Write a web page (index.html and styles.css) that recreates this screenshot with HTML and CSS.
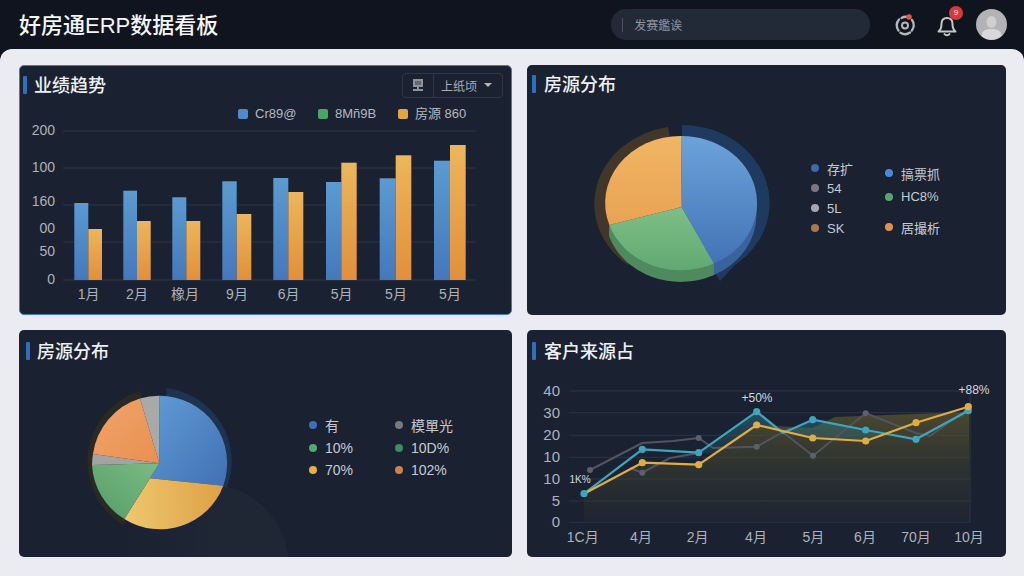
FILE: index.html
```html
<!DOCTYPE html>
<html lang="zh">
<head>
<meta charset="utf-8">
<title>好房通ERP数据看板</title>
<link rel="stylesheet" href="styles.css">
</head>
<body>
<div class="app">
  <header class="topbar">
    <h1 class="brand">好房通ERP数据看板</h1>
    <div class="search"><span class="caret-line"></span><span class="search-text">发赛鑑诶</span></div>
    <div class="actions">
      <svg class="ico" width="22" height="24" viewBox="0 0 22 24" fill="none" stroke="#b4b7bb" stroke-width="2.4" stroke-linecap="round">
        <path d="M5 6.5 A8.6 8.6 0 0 0 4.5 17.5"/><path d="M6.5 19.7 A8.6 8.6 0 0 0 16 19.5"/><path d="M17.8 17.5 A8.6 8.6 0 0 0 18 7"/><path d="M7.5 5 A8.6 8.6 0 0 1 12 3.8"/>
        <circle cx="11" cy="12.5" r="3" stroke-width="2"/>
        <circle cx="15" cy="4" r="2.8" fill="#e2544c" stroke="none"/>
      </svg>
      <div class="bell">
        <svg width="20" height="24" viewBox="0 0 20 24" fill="none" stroke="#c2c5c9" stroke-width="2" stroke-linejoin="round" stroke-linecap="round">
          <path d="M1.5 18.5 C4.5 16 4.5 14 4.5 11 C4.5 7.5 6.5 5 10 5 C13.5 5 15.5 7.5 15.5 11 C15.5 14 15.5 16 18.5 18.5 Z"/>
          <path d="M7.5 21 C8.5 22.5 11.5 22.5 12.5 21"/>
        </svg>
        <span class="badge">9</span>
      </div>
      <svg class="avatar" width="31" height="31" viewBox="0 0 31 31">
        <circle cx="15.5" cy="15.5" r="15.5" fill="#b3b3b5"/>
        <ellipse cx="15.5" cy="13" rx="5" ry="6" fill="#cfcfd1"/>
        <path d="M5.5 27 C6 21 10 20 15.5 20 C21 20 25 21 25.5 27 A15.5 15.5 0 0 1 5.5 27 Z" fill="#d8d8da"/>
      </svg>
    </div>
  </header>

  <main class="board">
    <section class="card card--active">
      <div class="card-head">
        <span class="mark mark--a"></span><h2 class="card-title">业绩趋势</h2>
        <div class="tools">
          <span class="tool-icon">
            <svg width="14" height="15" viewBox="0 0 14 15" fill="#8f9399"><path d="M2 1h10v8H2z"/><path d="M4 3.5h6v1H4zM4 5.5h6v1H4z" fill="#3a404b"/><path d="M6 9h2v2h4v2H2v-2h4z"/></svg>
          </span>
          <span class="tool-text">上纸顷</span>
          <span class="tool-caret"></span>
        </div>
      </div>
      <div class="bar-legend">
        <span class="sq-item sq-item--a"><i class="sq sq--blue"></i>Cr89@</span>
        <span class="sq-item sq-item--b"><i class="sq sq--green"></i>8Mñ9B</span>
        <span class="sq-item"><i class="sq sq--orange"></i>房源 860</span>
      </div>
      <svg class="chart" viewBox="20 121 491 193">
        <defs>
          <linearGradient id="gb" x1="0" y1="0" x2="0" y2="1"><stop offset="0" stop-color="#5b9bd0"/><stop offset="1" stop-color="#4478bc"/></linearGradient>
          <linearGradient id="go" x1="0" y1="0" x2="0" y2="1"><stop offset="0" stop-color="#ecb65c"/><stop offset="1" stop-color="#e28f3b"/></linearGradient>
        </defs>
        <g stroke="#2c3442" stroke-width="1">
          <path d="M63 131H476M63 168H476M63 205H476M63 242H476M63 280H476"/>
        </g>
        <g class="axis" text-anchor="end">
          <text x="55" y="135">200</text><text x="55" y="172">100</text><text x="55" y="206">160</text><text x="55" y="233">00</text><text x="55" y="256">50</text><text x="55" y="284">0</text>
        </g>
        <g fill="url(#gb)">
          <rect x="74.3" y="203" width="14" height="77"/><rect x="123.3" y="190.7" width="13.7" height="89.3"/><rect x="172.3" y="197.3" width="14" height="82.7"/><rect x="222.3" y="181.3" width="14.4" height="98.7"/><rect x="273.3" y="178" width="15" height="102"/><rect x="326" y="182" width="15.3" height="98"/><rect x="379.7" y="178.3" width="16" height="101.7"/><rect x="434" y="160.7" width="16" height="119.3"/>
        </g>
        <g fill="url(#go)">
          <rect x="88.3" y="229" width="13.7" height="51"/><rect x="137" y="221" width="13.7" height="59"/><rect x="186.3" y="221" width="14" height="59"/><rect x="236.7" y="214" width="14.6" height="66"/><rect x="288.3" y="192" width="15" height="88"/><rect x="341.3" y="162.7" width="15.4" height="117.3"/><rect x="395.7" y="155.3" width="15.6" height="124.7"/><rect x="450" y="145" width="15.7" height="135"/>
        </g>
        <g class="axis" text-anchor="middle">
          <text x="88.7" y="299">1月</text><text x="137" y="299">2月</text><text x="185" y="299">橡月</text><text x="237" y="299">9月</text><text x="288.7" y="299">6月</text><text x="341.7" y="299">5月</text><text x="396" y="299">5月</text><text x="450" y="299">5月</text>
        </g>
      </svg>
    </section>

    <section class="card">
      <div class="card-head">
        <span class="mark mark--r"></span><h2 class="card-title">房源分布</h2>
      </div>
      <div class="pie-body pie-body--top">
        <svg class="pie pie--top" viewBox="527 103 277 212">
          <defs>
            <linearGradient id="pb" x1="0" y1="0" x2="0" y2="1"><stop offset="0" stop-color="#6ca3da"/><stop offset="1" stop-color="#4373b6"/></linearGradient>
            <linearGradient id="pg" x1="0" y1="0" x2="0" y2="1"><stop offset="0" stop-color="#7fbe87"/><stop offset="1" stop-color="#62a873"/></linearGradient>
            <linearGradient id="po" x1="0" y1="0" x2="0" y2="1"><stop offset="0" stop-color="#f0b665"/><stop offset="1" stop-color="#e9a253"/></linearGradient>
          </defs>
          <path d="M682 203 L682 125 A88 78 0 0 1 735 265 L720 281 L712 268 Z" fill="#1f3a5f"/>
          <path d="M682 203 L668 127 A89 78 0 0 0 628 265 Z" fill="#40372a"/>
          <path d="M609 226 L609 236 A75.5 67 0 0 0 714 275 L714 263 Z" fill="#4f8a5e"/>
          <path d="M714 275 A75.5 67 0 0 0 756.5 214 L756.5 203 L714 263 Z" fill="#3a629c"/>
          <path d="M681.7 207 L681 136 A75.5 67 0 0 1 714 263.5 Z" fill="url(#pb)"/>
          <path d="M681.7 207 L714 263.5 A75.5 67 0 0 1 609.3 225 Z" fill="url(#pg)"/>
          <path d="M681.7 207 L609.3 225 A75.5 67 0 0 1 681 136 Z" fill="url(#po)"/>
        </svg>
        <div class="legend-col legend-col--a">
          <span class="leg"><i class="dot dot--navy"></i>存扩</span>
          <span class="leg"><i class="dot dot--gray"></i>54</span>
          <span class="leg"><i class="dot dot--silver"></i>5L</span>
          <span class="leg"><i class="dot dot--brown"></i>SK</span>
        </div>
        <div class="legend-col legend-col--b">
          <span class="leg"><i class="dot dot--blue"></i>搞票抓</span>
          <span class="leg leg--n2"><i class="dot dot--green"></i>HC8%</span>
          <span class="leg leg--n3"><i class="dot dot--orange"></i>居撮析</span>
        </div>
      </div>
    </section>

    <section class="card">
      <div class="card-head card-head--low">
        <span class="mark mark--m"></span><h2 class="card-title">房源分布</h2>
      </div>
      <div class="pie-body">
        <svg class="pie pie--low" viewBox="19 372 281 185">
          <defs>
            <linearGradient id="qb" x1="0" y1="0" x2="1" y2="1"><stop offset="0" stop-color="#5f9cd6"/><stop offset="1" stop-color="#4270b4"/></linearGradient>
            <linearGradient id="qy" x1="0" y1="0" x2="1" y2="0"><stop offset="0" stop-color="#edc86f"/><stop offset="1" stop-color="#dfa045"/></linearGradient>
            <linearGradient id="qg" x1="1" y1="0" x2="0" y2="1"><stop offset="0" stop-color="#7cbb84"/><stop offset="1" stop-color="#559c69"/></linearGradient>
            <linearGradient id="qo" x1="1" y1="1" x2="0" y2="0"><stop offset="0" stop-color="#ea8f50"/><stop offset="1" stop-color="#f0a56c"/></linearGradient>
            <linearGradient id="qc" x1="0" y1="0" x2="1" y2="0"><stop offset="0" stop-color="#1f2634" stop-opacity="0"/><stop offset=".6" stop-color="#1f2634"/></linearGradient>
          </defs>
          <circle cx="206" cy="567" r="83" fill="url(#qc)"/>
          <path d="M162 462 L166.7 388 A74 74 0 0 1 226.7 488 Z" fill="#1d3350"/>
          <path d="M162 462 L140 391 A74 74 0 0 0 123 525 Z" fill="#2a2a24"/>
          <path d="M159.3 463.3 L159.5 395.8 A67.5 67.5 0 0 1 223.3 485.7 L150 478.3 Z" fill="url(#qb)"/>
          <path d="M150 478.3 L223.3 485.7 A67.5 67.5 0 0 1 124.3 519 Z" fill="url(#qy)"/>
          <path d="M159.3 463.3 L150 478.3 L124.3 519 A67.5 67.5 0 0 1 92 465 Z" fill="url(#qg)"/>
          <path d="M159.3 463.3 L92 465 A67.5 67.5 0 0 1 93 454 Z" fill="#a3a3a1"/>
          <path d="M159.3 463.3 L93 454 A67.5 67.5 0 0 1 140 398.5 Z" fill="url(#qo)"/>
          <path d="M159.3 463.3 L140 398.5 A67.5 67.5 0 0 1 159.5 395.8 Z" fill="#a9a9a7"/>
        </svg>
        <div class="legend-grid">
          <span class="leg"><i class="dot dot--navy2"></i>有</span>
          <span class="leg"><i class="dot dot--gray"></i>模單光</span>
          <span class="leg"><i class="dot dot--green2"></i>10%</span>
          <span class="leg"><i class="dot dot--green3"></i>10D%</span>
          <span class="leg"><i class="dot dot--yellow"></i>70%</span>
          <span class="leg"><i class="dot dot--orange2"></i>102%</span>
        </div>
      </div>
    </section>

    <section class="card">
      <div class="card-head card-head--low">
        <span class="mark mark--r"></span><h2 class="card-title">客户来源占</h2>
      </div>
      <svg class="chart" viewBox="527 372 479 185">
        <defs>
          <linearGradient id="fy" gradientUnits="userSpaceOnUse" x1="0" y1="410" x2="0" y2="522"><stop offset="0" stop-color="#57532f" stop-opacity=".8"/><stop offset="1" stop-color="#3a3c2c" stop-opacity=".1"/></linearGradient>
          <linearGradient id="ft" x1="0" y1="0" x2="0" y2="1"><stop offset="0" stop-color="#2c7f93" stop-opacity=".5"/><stop offset="1" stop-color="#2c6f83" stop-opacity=".2"/></linearGradient>
        </defs>
        <path d="M569 391H970M569 412.7H970M569 435.3H970M569 457.3H970M569 479H970M569 501H970M569 522.3H970" stroke="#2a3443" stroke-width="1"/>
        <path d="M970 391V522" stroke="#2f3947" stroke-width="1"/>
        <path d="M584 493.7 L642.3 462.7 L698.7 464.7 L756.7 425 L812.7 428 L835 417 L969 412 V522 H584 Z" fill="url(#fy)"/>
        <path d="M698.7 452.7 L756.7 411.7 L783 433 L812.7 419.7 L865.7 430 L885 436 L865.7 441 L812.7 438 L756.7 425 L715 454 Z" fill="url(#ft)"/>
        <g fill="none" stroke="#4f5460" stroke-width="2" stroke-linejoin="round">
          <path d="M590 470 L642.3 443 L673 441 L698.7 438 L713 448 L756.7 446.7 L790 428"/>
          <path d="M630 468 L642.3 472.7 L670 458 L698.7 453"/>
          <path d="M756.7 411.7 L813 455.7 L865.7 413.3 L916 433 L930 436 L969 408"/>
        </g>
        <g fill="#5b606c"><circle cx="590" cy="470" r="3"/><circle cx="642.3" cy="472.7" r="3"/><circle cx="698.7" cy="438" r="3"/><circle cx="756.7" cy="446.7" r="3"/><circle cx="813" cy="455.7" r="3"/><circle cx="865.7" cy="413.3" r="3"/></g>
        <path d="M584 493.7 L642.3 449.3 L698.7 452.7 L756.7 411.7 L783 433 L812.7 419.7 L865.7 430 L916 439.3 L968.3 410.7" fill="none" stroke="#3fa5bd" stroke-width="2.2" stroke-linejoin="round"/>
        <path d="M584 493.7 L642.3 462.7 L698.7 464.7 L756.7 425 L812.7 438 L865.7 441 L916 422.7 L968.3 406.7" fill="none" stroke="#e0ad45" stroke-width="2.2" stroke-linejoin="round"/>
        <g fill="#3fa5bd"><circle cx="584" cy="493.7" r="3.6"/><circle cx="642.3" cy="449.3" r="3.6"/><circle cx="698.7" cy="452.7" r="3.6"/><circle cx="756.7" cy="411.7" r="3.6"/><circle cx="812.7" cy="419.7" r="3.6"/><circle cx="865.7" cy="430" r="3.6"/><circle cx="916" cy="439.3" r="3.6"/><circle cx="968.3" cy="410.7" r="3.6"/></g>
        <g fill="#e0ad45"><circle cx="642.3" cy="462.7" r="3.6"/><circle cx="698.7" cy="464.7" r="3.6"/><circle cx="756.7" cy="425" r="3.6"/><circle cx="812.7" cy="438" r="3.6"/><circle cx="865.7" cy="441" r="3.6"/><circle cx="916" cy="422.7" r="3.6"/><circle cx="968.3" cy="406.7" r="3.6"/></g>
        <g class="axis axis--l" text-anchor="end">
          <text x="560" y="396">40</text><text x="560" y="418">30</text><text x="560" y="440">20</text><text x="560" y="462">10</text><text x="560" y="484">10</text><text x="560" y="506">5</text><text x="560" y="527">0</text>
        </g>
        <g class="axis" text-anchor="middle">
          <text x="582.7" y="542">1C月</text><text x="641" y="542">4月</text><text x="697.7" y="542">2月</text><text x="756" y="542">4月</text><text x="813.3" y="542">5月</text><text x="865" y="542">6月</text><text x="916" y="542">70月</text><text x="969" y="542">10月</text>
        </g>
        <g class="tip" text-anchor="middle">
          <text x="757" y="402">+50%</text><text x="974" y="394">+88%</text><text class="tip-s" x="580" y="483">1K%</text>
        </g>
      </svg>
    </section>
  </main>
</div>
</body>
</html>
```
FILE: styles.css
```css
* { box-sizing: border-box; }
html, body { margin: 0; padding: 0; }
body {
  width: 1024px;
  height: 576px;
  overflow: hidden;
  background: #10141f;
  font-family: "Liberation Sans", "Noto Sans CJK SC", sans-serif;
  color: #fff;
}
.app { display: flex; flex-direction: column; height: 576px; }

.topbar {
  flex: 0 0 49px;
  display: flex;
  align-items: center;
  padding: 0 17px 0 19px;
  background: #10141f;
}
.brand {
  margin: -3px 0 0;
  font: 500 22px "Liberation Sans", "Noto Sans CJK SC", sans-serif;
  color: #f4f5f6;
  width: 593px;
  white-space: nowrap;
}
.search {
  width: 259px;
  height: 31px;
  border-radius: 15px;
  background: #222937;
  display: flex;
  align-items: center;
  padding-left: 11px;
}
.caret-line { width: 1px; height: 14px; background: #49505c; margin-right: 11px; }
.search-text { font-size: 12px; color: #8f949d; }
.actions { display: flex; align-items: center; margin-left: 24px; }
.ico { display: block; }
.bell { position: relative; width: 20px; height: 24px; margin-left: 21px; }
.bell svg { display: block; }
.badge {
  position: absolute;
  left: 12px;
  top: -7px;
  width: 14px;
  height: 14px;
  border-radius: 50%;
  background: #d63a3a;
  color: #f3dede;
  font-size: 8px;
  line-height: 14px;
  text-align: center;
}
.avatar { display: block; margin-left: 19px; }

.board {
  flex: 1;
  display: grid;
  grid-template-columns: 493px 479px;
  grid-template-rows: 250px 227px;
  gap: 15px;
  padding: 16px 18px 19px 19px;
  background: #eaecf1;
  border-radius: 12px 12px 0 0;
}
.card {
  display: flex;
  flex-direction: column;
  min-width: 0;
  min-height: 0;
  overflow: hidden;
  border-radius: 5px;
  background: #1a2232;
}
.card--active { border: 1px solid #3d7cc9; }
.card-head {
  flex: 0 0 38px;
  display: flex;
  align-items: center;
  padding-right: 8px;
}
.card-head--low { flex-basis: 42px; }
.mark {
  flex: none;
  width: 4px;
  height: 18px;
  margin: 0 8px 0 3px;
  border-radius: 1px;
  background: #2f6fc0;
}
.mark--a { margin-right: 7px; }
.mark--r { margin-left: 5px; }
.mark--m { margin: 0 7px 0 7px; }
.card-title {
  margin: -2px 0 0;
  font: 500 18px "Liberation Sans", "Noto Sans CJK SC", sans-serif;
  color: #eef0f2;
}
.tools {
  margin-left: auto;
  width: 101px;
  height: 25px;
  display: flex;
  align-items: center;
  border: 1px solid #2f3744;
  border-radius: 4px;
}
.tool-icon {
  flex: 0 0 31px;
  height: 100%;
  display: flex;
  align-items: center;
  justify-content: center;
  border-right: 1px solid #2f3744;
}
.tool-text { margin-left: 7px; font-size: 12px; color: #a9adb3; }
.tool-caret {
  margin-left: 7px;
  border: 4px solid transparent;
  border-top-color: #b5b8bd;
  border-bottom-width: 0;
}

.bar-legend {
  flex: 0 0 14px;
  min-height: 0;
  height: 14px;
  line-height: 14px;
  margin-top: 3px;
  padding-left: 218px;
  display: flex;
  align-items: center;
  font-size: 13px;
  color: #b4b9c0;
}
.sq-item { display: flex; align-items: center; gap: 7px; white-space: nowrap; height: 14px; }
.sq-item--a { width: 80px; }
.sq-item--b { width: 80px; }
.sq { width: 10px; height: 10px; border-radius: 2px; }
.sq--blue { background: #4f8ace; }
.sq--green { background: #4aa564; }
.sq--orange { background: #e3a443; }

.chart { display: block; flex: 1; width: 100%; min-height: 0; }
.axis { font-size: 14px; fill: #adb2ba; }
.axis--l { font-size: 15px; }
.tip { font-size: 12px; fill: #d5d8dc; }
.tip-s { font-size: 10px; }

.pie-body { flex: 1; display: flex; min-height: 0; align-items: flex-start; }
.pie { display: block; flex: none; }
.pie--top { width: 277px; height: 212px; }
.pie--low { width: 281px; height: 185px; }

.leg {
  display: flex;
  align-items: center;
  gap: 8px;
  height: 20px;
  font-size: 13px;
  color: #c6cad0;
  white-space: nowrap;
}
.dot { flex: none; width: 8px; height: 8px; border-radius: 50%; }
.dot--navy { background: #3f6aa8; }
.dot--gray { background: #77797e; }
.dot--silver { background: #a5a7aa; }
.dot--brown { background: #a9784a; }
.dot--blue { background: #4a8ad4; }
.dot--green { background: #55a674; }
.dot--orange { background: #e0914f; }
.dot--navy2 { background: #3f6fb5; }
.dot--green2 { background: #52a86f; }
.dot--green3 { background: #3f8a60; }
.dot--yellow { background: #e8ad4c; }
.dot--orange2 { background: #cc8348; }

.legend-col { display: flex; flex-direction: column; }
.legend-col--a { width: 74px; margin: 55px 0 0 7px; }
.legend-col--b { margin-top: 60px; }
.leg--n2 { margin-top: 3.6px; }
.leg--n3 { margin-top: 10.7px; }

.legend-grid {
  display: grid;
  grid-template-columns: 86px auto;
  grid-auto-rows: 22.5px;
  margin: 42px 0 0 9px;
}
.legend-grid .leg { height: 22.5px; font-size: 14px; }
```
